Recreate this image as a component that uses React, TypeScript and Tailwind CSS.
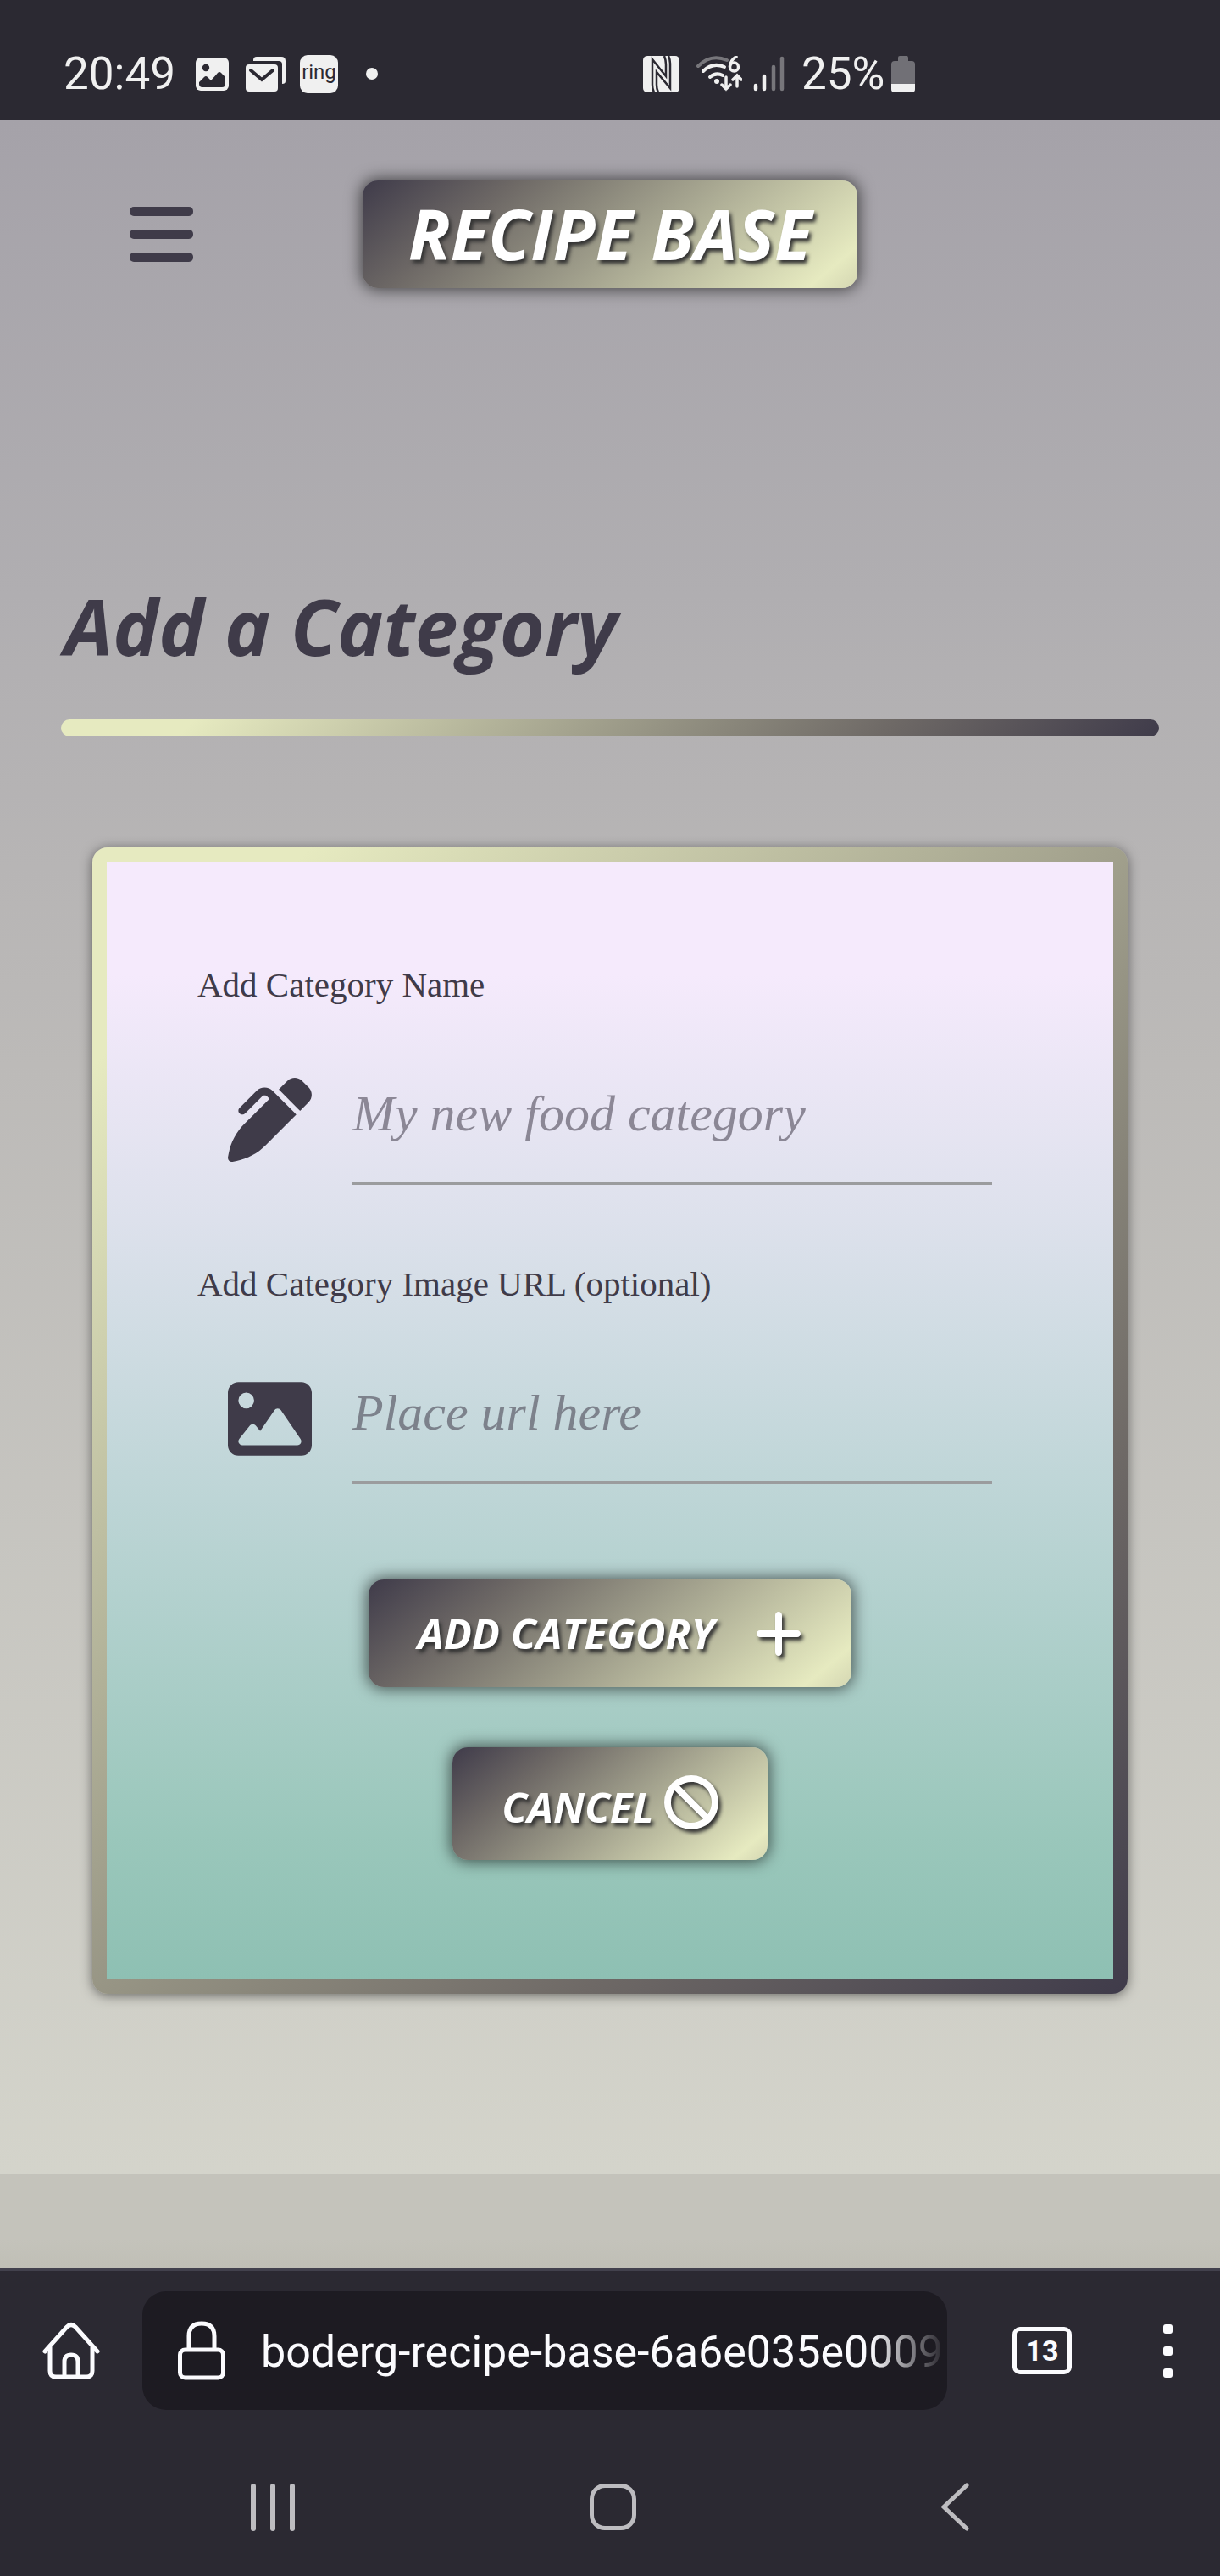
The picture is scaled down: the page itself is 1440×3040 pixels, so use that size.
import React from "react";
import { FaPenClip, FaImage, FaPlus, FaBan } from "react-icons/fa6";

const titleFont = "font-['Open_Sans','Noto_Sans',sans-serif] font-bold italic";
const uiFont = "font-['Roboto',sans-serif]";

const actionSurface =
  "rounded-[18px] bg-[linear-gradient(140deg,#3f3b4a_0%,#6e6966_25%,#e6eac0_92%,#d4d6b2_100%)] shadow-[0_0_18px_2px_rgba(0,0,0,0.6)] text-white [text-shadow:3px_4px_4px_#333]";
const iconShadow = "drop-shadow-[3px_4px_2px_#333]";

function StatusBar() {
  return (
    <div className={`flex h-[142px] items-center bg-[#2b2932] pl-[75px] pt-8 text-[#f0f0f0] ${uiFont}`}>
      <span className="w-[156px] text-[53px] leading-[60px]">20:49</span>
      <svg className="mr-5 h-[39px] w-[39px]" viewBox="0 0 39 39" aria-hidden="true">
        <rect width="39" height="39" rx="6" fill="currentColor" />
        <circle cx="12" cy="12" r="4.2" fill="#2b2932" />
        <path d="M4 29l6-6q2-2 4 0l4 4 8-9q2-2 4 0l5 5v8q0 4-4 4H8q-4 0-4-4z" fill="#2b2932" />
      </svg>
      <svg className="mr-[17px] h-[41px] w-[47px]" viewBox="0 0 47 41" aria-hidden="true">
        <path d="M9 5V4q0-4 4-4h29q5 0 5 5v24q0 3-4 3V9q0-4-4-4z" fill="currentColor" />
        <rect y="9" width="38" height="32" rx="4" fill="currentColor" />
        <path d="M6 16l13 11 13-11" fill="none" stroke="#2b2932" strokeWidth="4" strokeLinecap="round" />
      </svg>
      <span className="flex h-[45px] w-[45px] items-center justify-center rounded-[9px] bg-[#f0f0f0] pb-1 text-[24px] leading-none text-[#2b2932]">
        ring
      </span>
      <span className="ml-[33px] mr-[313px] h-[14px] w-[14px] rounded-full bg-[#f0f0f0]" />
      <svg className="mr-5 h-[43px] w-[43px]" viewBox="0 0 43 43" aria-hidden="true">
        <rect width="43" height="43" rx="5" fill="currentColor" />
        <path
          d="M13 43q-2-4-2-9V4l16 20V10q0-5-2-10M18 43q-2-4-2-9V19l16 19V9q0-5-2-9"
          fill="none"
          stroke="#2b2932"
          strokeWidth="2.500"
        />
      </svg>
      <svg className="mr-[13px] h-[42px] w-[54px]" viewBox="0 0 54 42" fill="none" stroke="currentColor" strokeLinecap="round" aria-hidden="true">
        <path d="M2 12Q17-3 36 5" stroke="#77767b" strokeWidth="4" />
        <path d="M8 18q11-11 25-5M16 25q7-6 15-2" strokeWidth="4" />
        <circle cx="24" cy="30" r="3" fill="currentColor" stroke="none" />
        <circle cx="44.500" cy="13" r="5" strokeWidth="3.500" />
        <path d="M47 1q-6 3-7.500 11" strokeWidth="3.500" />
        <path d="M35 25v14M30 34l5 5 5-5M48 36V23M43 28l5-5 5 5" strokeWidth="3.500" />
      </svg>
      <svg className="mr-[20px] h-[42px] w-[37px]" viewBox="0 0 37 42" strokeWidth="4.500" strokeLinecap="round" aria-hidden="true">
        <path d="M3 35v4M13 24v15" stroke="currentColor" />
        <path d="M24 13v26M34 3v36" stroke="#77767b" />
      </svg>
      <span className="w-[106px] text-[53px] leading-[60px]">25%</span>
      <svg className="h-[43px] w-[28px]" viewBox="0 0 28 43" aria-hidden="true">
        <path d="M8 6V2q0-2 2-2h8q2 0 2 2v4h4q4 0 4 4v29q0 4-4 4H4q-4 0-4-4V10q0-4 4-4z" fill="#717076" />
        <path d="M0 33h28v6q0 4-4 4H4q-4 0-4-4z" fill="currentColor" />
      </svg>
    </div>
  );
}

function Header() {
  return (
    <header className="grid grid-cols-[1fr_auto_1fr] items-center pt-[71px]">
      <button type="button" aria-label="Open menu" className="ml-[153px] flex w-[75px] flex-col gap-4">
        <span className="h-[11px] w-full rounded-[5px] bg-[#3f3b49]" />
        <span className="h-[11px] w-full rounded-[5px] bg-[#3f3b49]" />
        <span className="h-[11px] w-full rounded-[5px] bg-[#3f3b49]" />
      </button>
      <a href="#home" className={`flex h-[127px] items-center px-[54px] pb-1 text-[82px] leading-none ${titleFont} ${actionSurface}`}>
        RECIPE BASE
      </a>
    </header>
  );
}

type FieldProps = {
  id: string;
  label: string;
  placeholder: string;
  icon: React.ReactNode;
};

function Field({ id, label, placeholder, icon }: FieldProps) {
  return (
    <div className="h-[353px] text-[#3f3b49] font-['Liberation_Serif',serif]">
      <label htmlFor={id} className="block text-[41px] leading-[48px]">
        {label}
      </label>
      <div className="mt-[59px] flex items-center px-9">
        <span className="mr-12 flex h-[99px] w-[99px] shrink-0 items-center justify-center text-[99px]">{icon}</span>
        <input
          id={id}
          type="text"
          placeholder={placeholder}
          className="h-[153px] min-w-0 flex-1 border-b-[3px] border-[#9b9c9e] bg-transparent pb-3 text-[60px] outline-none placeholder:italic placeholder:text-[#3f3b49]/55"
        />
      </div>
    </div>
  );
}

function CategoryForm() {
  return (
    <form className="mx-[109px] mt-[131px] rounded-[18px] bg-[linear-gradient(135deg,#e6eac0_10%,#6e6966_75%,#3f3b4a_100%)] p-[17px] shadow-[0_2px_14px_rgba(0,0,0,0.5)]">
      <div className="flex flex-col bg-[linear-gradient(180deg,#f5eafc_10%,#dde1ec_32%,#bdd5d6_57%,#9ac7bb_87%,#8ec0b3_100%)] px-[107px] pb-[141px] pt-[121px]">
        <Field id="category-name" label="Add Category Name" placeholder="My new food category" icon={<FaPenClip />} />
        <Field id="category-image" label="Add Category Image URL (optional)" placeholder="Place url here" icon={<FaImage />} />
        <div className="mt-5 flex flex-col items-center gap-[71px]">
          <button type="submit" className={`flex h-[127px] items-center gap-12 px-[58px] text-[49px] leading-none ${titleFont} ${actionSurface}`}>
            ADD CATEGORY
            <FaPlus className={`h-16 w-14 ${iconShadow}`} />
          </button>
          <button type="button" className={`flex h-[133px] items-center gap-3 px-[58px] pb-1 text-[49px] leading-none ${titleFont} ${actionSurface}`}>
            <span className="pt-3">CANCEL</span>
            <FaBan className={`h-16 w-16 ${iconShadow}`} />
          </button>
        </div>
      </div>
    </form>
  );
}

function AddressBar() {
  return (
    <div className={`flex items-center border-t-4 border-[#42414d] pt-6 text-[#fbfbfe] ${uiFont}`}>
      <button type="button" aria-label="Home" className="ml-[50px] mr-[50px] shrink-0">
        <svg className="h-[68px] w-[68px]" viewBox="0 0 68 68" fill="none" stroke="currentColor" strokeWidth="5" strokeLinecap="round" strokeLinejoin="round" aria-hidden="true">
          <path d="M3 35L29 6q5-5 10 0l26 29M9 30v28q0 7 7 7h36q7 0 7-7V30M26 64V47q0-8 8-8t8 8v17" />
        </svg>
      </button>
      <div className="flex h-[140px] min-w-0 flex-1 items-center rounded-[28px] bg-[#1d1b22] pl-[42px]">
        <svg className="mr-[42px] h-[70px] w-[56px] shrink-0" viewBox="0 0 56 70" fill="none" stroke="currentColor" strokeWidth="5" aria-hidden="true">
          <rect x="2.500" y="34" width="51" height="33" rx="6" />
          <path d="M13 34V18q0-15 15-15t15 15v16" />
        </svg>
        <span className="min-w-0 flex-1 overflow-hidden whitespace-nowrap pt-1 text-[52px] leading-[64px] [mask-image:linear-gradient(90deg,#000_calc(100%-90px),transparent)]">
          boderg-recipe-base-6a6e035e0009
        </span>
      </div>
      <button type="button" aria-label="Tabs" className="ml-[77px] flex h-[56px] w-[70px] items-center justify-center rounded-[9px] border-[5px] border-[#fbfbfe] text-[34px] font-bold leading-none">
        13
      </button>
      <button type="button" aria-label="Menu" className="ml-[108px] mr-14 flex flex-col gap-[15px]">
        <span className="h-[11px] w-[11px] rounded-[3px] bg-[#fbfbfe]" />
        <span className="h-[11px] w-[11px] rounded-[3px] bg-[#fbfbfe]" />
        <span className="h-[11px] w-[11px] rounded-[3px] bg-[#fbfbfe]" />
      </button>
    </div>
  );
}

function SystemNav() {
  return (
    <nav className="grid grid-cols-[1fr_auto_1fr] items-center pb-[53px] pl-[296px] pr-[290px] pt-[86px] text-[#bdbcc0]">
      <button type="button" aria-label="Recent apps" className="flex h-[56px] w-[52px] justify-between">
        <span className="w-[6px] rounded-full bg-[#bdbcc0]" />
        <span className="w-[6px] rounded-full bg-[#bdbcc0]" />
        <span className="w-[6px] rounded-full bg-[#bdbcc0]" />
      </button>
      <button type="button" aria-label="Home screen" className="h-[55px] w-[55px] rounded-[18px] border-[5px] border-[#bdbcc0]" />
      <button type="button" aria-label="Back" className="mr-1.5 justify-self-end">
        <svg className="h-[57px] w-[34px]" viewBox="0 0 34 57" fill="none" stroke="currentColor" strokeWidth="5" strokeLinecap="round" aria-hidden="true">
          <path d="M31 3L4 28.500 31 54" />
        </svg>
      </button>
    </nav>
  );
}

export default function App() {
  return (
    <div className="flex min-h-screen flex-col bg-[#2b2932]">
      <StatusBar />
      <main className="bg-[linear-gradient(180deg,#a5a2a9_0%,#b0aeb1_23%,#bcbab8_46%,#d4d4cb_100%)] pb-[212px]">
        <Header />
        <div className="mx-[72px] mt-[339px]">
          <h1 className={`pl-1 text-[91px] leading-[120px] text-[#3f3b49] ${titleFont}`}>Add a Category</h1>
          <hr className="mt-[50px] h-5 rounded-full border-0 bg-[linear-gradient(135deg,#e6eac0_12%,#6e6966_75%,#3f3b4a_100%)]" />
        </div>
        <CategoryForm />
      </main>
      <div className="h-[111px] bg-[linear-gradient(180deg,#c4c3bb_70%,#c0bfb6)]" />
      <AddressBar />
      <SystemNav />
    </div>
  );
}
